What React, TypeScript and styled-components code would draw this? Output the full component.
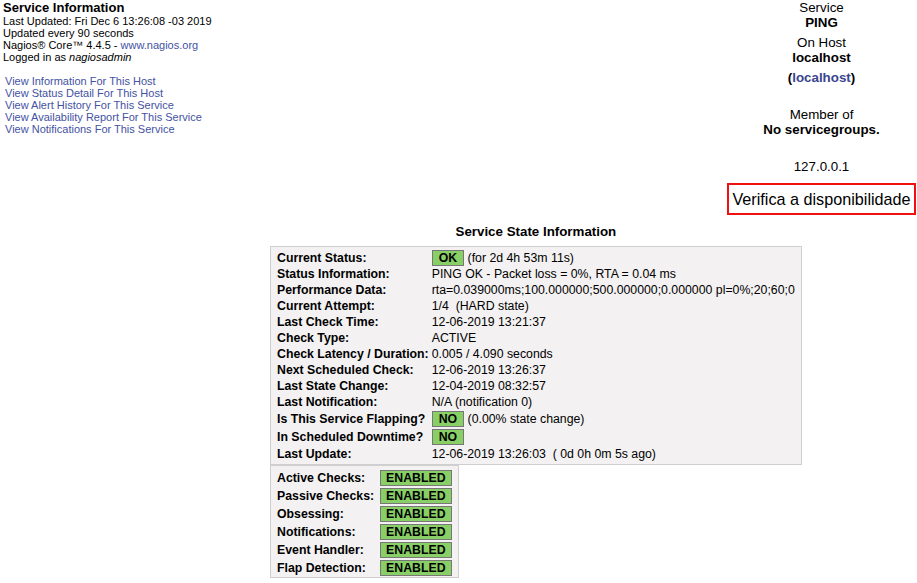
import React from "react";
import styled, { createGlobalStyle } from "styled-components";

const Global = createGlobalStyle`
  html, body { margin: 0; padding: 0; background: #fff; }
  body { font-family: "Liberation Sans", Arial, sans-serif; color: #000; }
`;

const Page = styled.div`
  width: 917px;
  min-height: 583px;
  font-family: "Liberation Sans", Arial, sans-serif;
`;

const TopRow = styled.div`
  display: flex;
  justify-content: space-between;
  align-items: flex-start;
`;

const InfoBox = styled.div`
  padding-left: 3px;
  font-size: 11px;
  line-height: 12px;
`;

const InfoTitle = styled.div`
  font-size: 13px;
  font-weight: bold;
  line-height: 15px;
`;

const InfoLine = styled.div``;

const LinkList = styled.div`
  margin-top: 12px;
  padding-left: 2px;
  display: flex;
  flex-direction: column;
`;

const Link = styled.a`
  color: #4352a2;
  text-decoration: none;
  line-height: 12px;
`;

const HostBox = styled.div`
  width: 191px;
  display: flex;
  flex-direction: column;
  align-items: center;
  font-size: 13.33px;
  line-height: 15px;
`;

const DataTitle = styled.div<{ $gap?: number }>`
  margin-top: ${(p) => p.$gap ?? 0}px;
`;

const DataValue = styled.div<{ $gap?: number }>`
  font-weight: bold;
  margin-top: ${(p) => p.$gap ?? 0}px;
`;

const HostLink = styled.a`
  color: #3a4690;
  text-decoration: none;
`;

const Notes = styled.div`
  margin-top: 9px;
  border: 2px solid #f01010;
  padding: 0 3px;
  font-size: 16.2px;
  line-height: 28px;
  white-space: nowrap;
`;

const Center = styled.div`
  margin-left: 270px;
  margin-top: 9px;
  display: inline-flex;
  flex-direction: column;
  align-items: flex-start;
`;

const SectionTitle = styled.div`
  align-self: stretch;
  text-align: center;
  font-size: 13.33px;
  font-weight: bold;
  line-height: 15px;
  margin-bottom: 7px;
`;

const StateTable = styled.div<{ $gap: number }>`
  display: grid;
  grid-template-columns: max-content max-content;
  column-gap: ${(p) => p.$gap}px;
  background: #f3f1f1;
  border: 1px solid #cfcfcf;
  padding: 2px 6px 2px 6px;
  font-size: 12.3px;
  line-height: 14px;
`;

const Cell = styled.div<{ $h: number }>`
  height: ${(p) => p.$h}px;
  display: flex;
  align-items: center;
  white-space: pre;
`;

const Label = styled(Cell)`
  font-weight: bold;
`;

const Badge = styled.span<{ $wide?: boolean }>`
  display: inline-block;
  background: #88d066;
  border: 1px solid #777;
  font-weight: bold;
  padding: 0 ${(p) => (p.$wide ? 5 : 6)}px;
  line-height: 14px;
  text-align: center;
`;

const FeatureTable = styled(StateTable)`
  margin-top: 0;
  padding: 3px 6px 0 6px;
`;

type Row = { label: string; value: React.ReactNode; h?: number };

const stateRows: Row[] = [
  {
    label: "Current Status:",
    value: (
      <>
        <Badge>OK</Badge>
        {" (for 2d 4h 53m 11s)"}
      </>
    ),
    h: 17,
  },
  { label: "Status Information:", value: "PING OK - Packet loss = 0%, RTA = 0.04 ms" },
  {
    label: "Performance Data:",
    value: "rta=0.039000ms;100.000000;500.000000;0.000000 pl=0%;20;60;0",
  },
  { label: "Current Attempt:", value: "1/4  (HARD state)" },
  { label: "Last Check Time:", value: "12-06-2019 13:21:37" },
  { label: "Check Type:", value: "ACTIVE" },
  { label: "Check Latency / Duration:", value: "0.005 / 4.090 seconds" },
  { label: "Next Scheduled Check:", value: "12-06-2019 13:26:37" },
  { label: "Last State Change:", value: "12-04-2019 08:32:57" },
  { label: "Last Notification:", value: "N/A (notification 0)" },
  {
    label: "Is This Service Flapping?",
    value: (
      <>
        <Badge>NO</Badge>
        {" (0.00% state change)"}
      </>
    ),
    h: 18,
  },
  { label: "In Scheduled Downtime?", value: <Badge>NO</Badge>, h: 18 },
  { label: "Last Update:", value: "12-06-2019 13:26:03  ( 0d 0h 0m 5s ago)" },
];

const features = [
  "Active Checks:",
  "Passive Checks:",
  "Obsessing:",
  "Notifications:",
  "Event Handler:",
  "Flap Detection:",
];

export default function App() {
  return (
    <Page>
      <Global />
      <TopRow>
        <InfoBox>
          <InfoTitle>Service Information</InfoTitle>
          <InfoLine>Last Updated: Fri Dec 6 13:26:08 -03 2019</InfoLine>
          <InfoLine>Updated every 90 seconds</InfoLine>
          <InfoLine>
            Nagios® Core™ 4.4.5 - <Link href="#">www.nagios.org</Link>
          </InfoLine>
          <InfoLine>
            Logged in as <i>nagiosadmin</i>
          </InfoLine>
          <LinkList>
            <Link href="#">View Information For This Host</Link>
            <Link href="#">View Status Detail For This Host</Link>
            <Link href="#">View Alert History For This Service</Link>
            <Link href="#">View Availability Report For This Service</Link>
            <Link href="#">View Notifications For This Service</Link>
          </LinkList>
        </InfoBox>
        <HostBox>
          <DataTitle>Service</DataTitle>
          <DataValue>PING</DataValue>
          <DataTitle $gap={5}>On Host</DataTitle>
          <DataValue>localhost</DataValue>
          <DataValue $gap={5}>
            (<HostLink href="#">localhost</HostLink>)
          </DataValue>
          <DataTitle $gap={22}>Member of</DataTitle>
          <DataValue>No servicegroups.</DataValue>
          <DataTitle $gap={22}>127.0.0.1</DataTitle>
          <Notes>Verifica a disponibilidade</Notes>
        </HostBox>
      </TopRow>
      <Center>
        <SectionTitle>Service State Information</SectionTitle>
        <StateTable $gap={3}>
          {stateRows.map((r) => (
            <React.Fragment key={r.label}>
              <Label $h={r.h ?? 16}>{r.label}</Label>
              <Cell $h={r.h ?? 16}>{r.value}</Cell>
            </React.Fragment>
          ))}
        </StateTable>
        <FeatureTable $gap={6}>
          {features.map((f) => (
            <React.Fragment key={f}>
              <Label $h={18}>{f}</Label>
              <Cell $h={18}>
                <Badge $wide>ENABLED</Badge>
              </Cell>
            </React.Fragment>
          ))}
        </FeatureTable>
      </Center>
    </Page>
  );
}
